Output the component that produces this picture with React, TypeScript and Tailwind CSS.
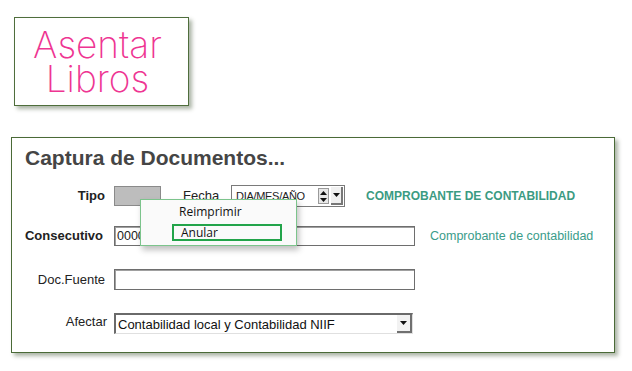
import React from "react";

function DownArrow() {
  return (
    <svg width="7" height="4" viewBox="0 0 7 4">
      <path d="M0 0h7L3.5 4z" fill="#111" />
    </svg>
  );
}

function DateField() {
  return (
    <div className="ml-[12px] flex h-[22px] w-[114px] items-center border border-[#7a7a7a] bg-white">
      <span className="ml-[4px] flex-1 text-[11px] tracking-[-0.3px] text-[#222]">DIA/MES/AÑO</span>
      <div className="flex h-[16px] w-[11px] flex-col border border-[#9a9a9a] bg-[#e8e8e8]">
        <div className="flex flex-1 items-center justify-center">
          <svg width="7" height="4" viewBox="0 0 7 4">
            <path d="M0 4h7L3.5 0z" fill="#111" />
          </svg>
        </div>
        <div className="flex flex-1 items-center justify-center">
          <DownArrow />
        </div>
      </div>
      <div className="ml-[2px] mr-[1px] flex h-[18px] w-[12px] items-center justify-center border-b-2 border-r-2 border-[#777] bg-[#f0f0f0]">
        <DownArrow />
      </div>
    </div>
  );
}

export default function App() {
  return (
    <div className="relative h-[371px] w-[632px] overflow-hidden bg-white font-['Liberation_Sans',Arial,sans-serif] text-[13px] text-[#222]">
      <div className="ml-[14px] mt-[17px] flex h-[89px] w-[175px] flex-col items-center justify-center border border-[#4f6e3c] bg-white pr-[8px] font-['Inter',sans-serif] text-[37px] font-extralight leading-[34px] text-[#ee3592] shadow-[3px_3px_4px_rgba(70,90,60,0.45)]">
        <span>Asentar</span>
        <span>Libros</span>
      </div>

      <div className="ml-[11px] mt-[31px] h-[216px] w-[604px] border border-[#4a6a37] bg-white pt-[9px] shadow-[3px_3px_4px_rgba(70,90,60,0.45)]">
        <div className="ml-[13px] h-[22px] text-[21px] font-bold leading-[22px] text-[#454545]">
          Captura de Documentos...
        </div>

        <div className="mt-[15px] flex h-[24px] items-center">
          <div className="w-[93px] text-right font-bold">Tipo</div>
          <div className="ml-[9px] h-[20px] w-[47px] border border-[#8a8a8a] bg-[#bdbdbd]" />
          <div className="ml-[22px] w-[36px]">Fecha</div>
          <DateField />
          <div className="ml-[21px] text-[12px] font-bold text-[#3b9b82]">COMPROBANTE DE CONTABILIDAD</div>
        </div>

        <div className="mt-[18px] flex h-[20px] items-center">
          <div className="w-[91px] text-right font-bold">Consecutivo</div>
          <div className="ml-[11px] flex h-[20px] w-[301px] items-center border border-[#6e6e6e] bg-white pl-[2px] text-[12.5px] shadow-[inset_1px_1px_0_#a0a0a0]">
            0000001
          </div>
          <div className="ml-[15px] text-[12.5px] text-[#3a9c8a]">Comprobante de contabilidad</div>
        </div>

        <div className="mt-[23px] flex h-[21px] items-center">
          <div className="w-[93px] text-right">Doc.Fuente</div>
          <div className="ml-[9px] h-[21px] w-[301px] border border-[#6e6e6e] bg-white shadow-[inset_1px_1px_0_#a0a0a0]" />
        </div>

        <div className="mt-[23px] flex h-[21px] items-center">
          <div className="mb-[4px] w-[95px] text-right">Afectar</div>
          <div className="ml-[7px] flex h-[21px] w-[299px] items-center border-l-2 border-t-2 border-[#6a6a6a] border-b border-r border-b-[#e0e0e0] border-r-[#e0e0e0] bg-white">
            <span className="ml-[2px] flex-1 pt-[1px] text-[13px] text-[#111]">Contabilidad local y Contabilidad NIIF</span>
            <div className="flex h-full w-[15px] items-center justify-center border-b-2 border-r-2 border-[#707070] bg-[#f2f2f2]">
              <DownArrow />
            </div>
          </div>
        </div>
      </div>

      <div className="absolute left-[140px] top-[199px] h-[47px] w-[157px] border border-[#7cc48c] bg-[#fafafa] font-['Open_Sans',sans-serif] text-[12px] text-[#111] shadow-[2px_4px_6px_rgba(0,0,0,0.25)]">
        <div className="ml-[38px] mt-[3px] h-[18px] leading-[18px]">Reimprimir</div>
        <div className="ml-[31px] mt-[3px] flex h-[17px] w-[110px] items-center border-2 border-[#22a44a] pl-[7px] leading-none">
          Anular
        </div>
      </div>
    </div>
  );
}
